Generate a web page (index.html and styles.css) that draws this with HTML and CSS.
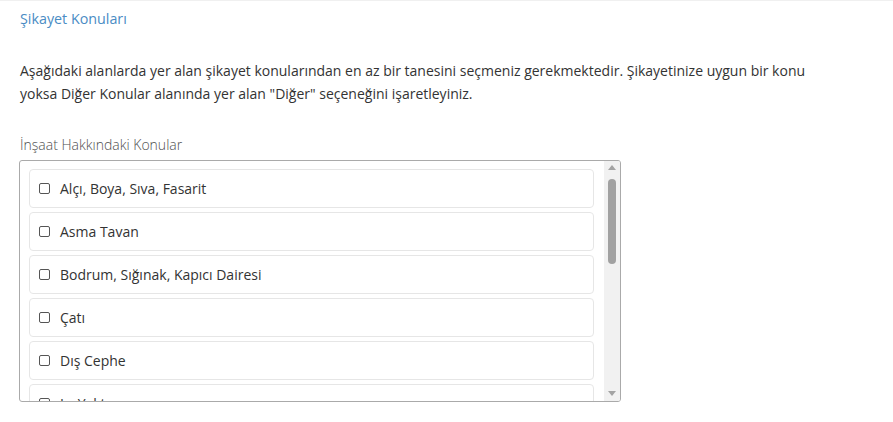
FILE: index.html
```html
<!DOCTYPE html>
<html lang="tr">
<head>
<meta charset="utf-8">
<link rel="stylesheet" href="styles.css">
</head>
<body>
<div class="page">
  <h2 class="title">Şikayet Konuları</h2>
  <p class="intro">Aşağıdaki alanlarda yer alan şikayet konularından en az bir tanesini seçmeniz gerekmektedir. Şikayetinize uygun bir konu yoksa Diğer Konular alanında yer alan "Diğer" seçeneğini işaretleyiniz.</p>
  <div class="group-label">İnşaat Hakkındaki Konular</div>
  <div class="box">
    <div class="list">
      <label class="item"><span class="cb"></span>Alçı, Boya, Sıva, Fasarit</label>
      <label class="item"><span class="cb"></span>Asma Tavan</label>
      <label class="item"><span class="cb"></span>Bodrum, Sığınak, Kapıcı Dairesi</label>
      <label class="item"><span class="cb"></span>Çatı</label>
      <label class="item"><span class="cb"></span>Dış Cephe</label>
      <label class="item"><span class="cb"></span>Isı Yalıtımı</label>
    </div>
    <div class="scrollbar">
      <div class="arrow up"></div>
      <div class="track"><div class="thumb"></div></div>
      <div class="arrow down"></div>
    </div>
  </div>
</div>
</body>
</html>
```
FILE: styles.css
```css
html, body {
  margin: 0;
  padding: 0;
  background: #fff;
}
body {
  font-family: "Open Sans", "DejaVu Sans", sans-serif;
  font-size: 14px;
  color: #333;
  border-top: 1px solid #f0f0f0;
}
.page {
  padding: 0 20px;
}
.title {
  margin: 0;
  padding-top: 8px;
  font-size: 14.3px;
  font-weight: 400;
  line-height: 20px;
  color: #4a8cc4;
}
.intro {
  margin: 30px 0 0 0;
  width: 805px;
  line-height: 23px;
  color: #333;
}
.group-label {
  margin-top: 30px;
  line-height: 20px;
  color: #505050;
  font-weight: 300;
}
.box {
  margin-top: 5px;
  width: 600px;
  height: 240px;
  margin-left: -1px;
  border: 1px solid #aaa;
  border-radius: 3px;
  display: flex;
  overflow: hidden;
}
.list {
  flex: 1;
  padding: 8px 10px 0 9px;
  display: flex;
  flex-direction: column;
  gap: 4px;
  overflow: hidden;
}
.item {
  flex: none;
  height: 37px;
  border: 1px solid #e6e6e6;
  border-radius: 4px;
  display: flex;
  align-items: center;
  padding-left: 9px;
  color: #333;
}
.cb {
  width: 9px;
  height: 9px;
  border: 1px solid #555;
  border-radius: 2px;
  margin-right: 10px;
  background: #fff;
}
.scrollbar {
  width: 16px;
  flex: none;
  background: #f1f1f1;
  display: flex;
  flex-direction: column;
  align-items: center;
}
.arrow {
  width: 0;
  height: 0;
  border-left: 4px solid transparent;
  border-right: 4px solid transparent;
}
.arrow.up {
  margin-top: 4px;
  border-bottom: 5px solid #a3a3a3;
}
.arrow.down {
  margin-bottom: 5px;
  border-top: 5px solid #a3a3a3;
}
.track {
  flex: 1;
  width: 100%;
  display: flex;
  justify-content: center;
  padding-top: 9px;
}
.thumb {
  width: 8px;
  height: 85px;
  border-radius: 4px;
  background: #a1a1a1;
}
```
